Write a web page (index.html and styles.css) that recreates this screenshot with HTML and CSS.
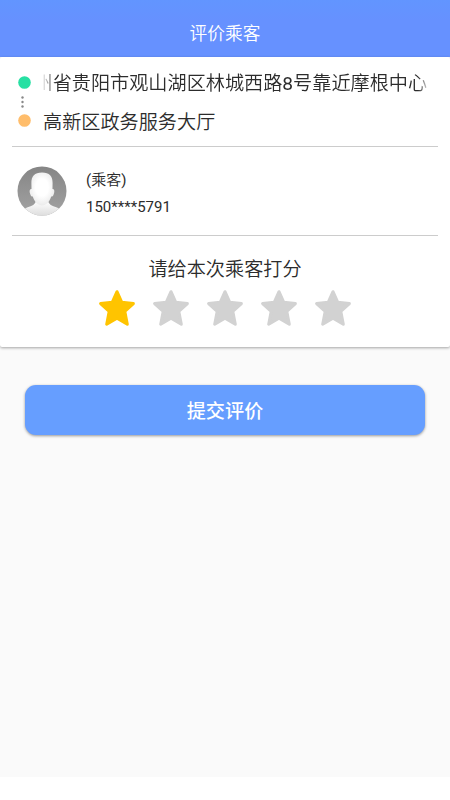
FILE: index.html
```html
<!DOCTYPE html>
<html lang="zh-CN">
<head>
<meta charset="utf-8">
<meta name="viewport" content="width=device-width">
<title>评价乘客</title>
<link rel="stylesheet" href="styles.css">
</head>
<body>
<svg class="defs" width="0" height="0">
  <symbol id="star" viewBox="0 0 38 38">
    <path d="M19 2.7 L23.7 13.2 L35.4 14.6 L26.8 22.4 L29.3 35.2 L19 29.3 L8.7 35.2 L11.2 22.4 L2.6 14.6 L14.3 13.2 Z" fill="currentColor" stroke="currentColor" stroke-width="3" stroke-linejoin="round"/>
  </symbol>
</svg>
<main class="screen">
  <header class="header"><h1 class="header-title">评价乘客</h1></header>
  <section class="card">
    <div class="trip">
      <div class="route-marks">
        <svg class="mark start" viewBox="0 0 13 13"><circle cx="6.5" cy="6.5" r="6.3"/></svg>
        <svg class="dots" viewBox="0 0 3 12"><circle cx="1.5" cy="1.5" r="1.2"/><circle cx="1.5" cy="6" r="1.2"/><circle cx="1.5" cy="10.5" r="1.2"/></svg>
        <svg class="mark end" viewBox="0 0 13 13"><circle cx="6.5" cy="6.5" r="6.3"/></svg>
      </div>
      <div class="places">
        <p class="place scrolling"><span class="marquee">州省贵阳市观山湖区林城西路<span class="num">8</span>号靠近摩根中心</span></p>
        <p class="place">高新区政务服务大厅</p>
      </div>
    </div>
    <div class="passenger">
      <svg class="avatar" viewBox="0 0 50 50">
        <defs>
          <linearGradient id="bg" x1="0" y1="0" x2="0" y2="1"><stop offset="0" stop-color="#858585"/><stop offset="1" stop-color="#a3a3a3"/></linearGradient>
          <radialGradient id="skin" cx=".5" cy=".45" r=".65"><stop offset=".4" stop-color="#fff"/><stop offset="1" stop-color="#e4e4e4"/></radialGradient>
          <linearGradient id="body" x1="0" y1="0" x2="0" y2="1"><stop offset="0" stop-color="#fff"/><stop offset="1" stop-color="#dcdcdc"/></linearGradient>
          <clipPath id="round"><circle cx="25" cy="25" r="24.5"/></clipPath>
        </defs>
        <g clip-path="url(#round)">
          <path d="M0 0H50V50H0Z" fill="url(#bg)"/>
          <path d="M5 50 Q6 43 10 41.5 Q18 39.5 19 35 H31 Q32 39.5 40 41.5 Q44 43 45 50Z" fill="url(#body)"/>
          <path d="M25 6.5 C17.5 6.5 14.3 10.5 14.4 17 L14.5 23 C12.4 23 12.3 25.5 13.2 28 C13.8 30 14.7 30.7 15.8 30.5 C17.5 36 21 39.5 25 39.5 C29 39.5 32.5 36 34.2 30.5 C35.3 30.7 36.2 30 36.8 28 C37.7 25.5 37.6 23 35.5 23 L35.6 17 C35.7 10.5 32.5 6.5 25 6.5Z" fill="url(#skin)"/>
        </g>
      </svg>
      <div class="passenger-info">
        <p class="role"><span class="num">(</span>乘客<span class="num">)</span></p>
        <p>150****5791</p>
      </div>
    </div>
    <div class="rating">
      <h2 class="rating-title">请给本次乘客打分</h2>
      <div class="stars">
        <svg class="star on"><use href="#star"/></svg>
        <svg class="star"><use href="#star"/></svg>
        <svg class="star"><use href="#star"/></svg>
        <svg class="star"><use href="#star"/></svg>
        <svg class="star"><use href="#star"/></svg>
      </div>
    </div>
  </section>
  <button class="submit" type="button">提交评价</button>
</main>
</body>
</html>
```
FILE: styles.css
```css
* { box-sizing: border-box; }
body {
  margin: 0;
  background: #fff;
  color: #2c2c2c;
  font-family: Roboto, "Noto Sans CJK SC", sans-serif;
}
h1, h2, p { margin: 0; font-weight: 400; }
.defs { display: block; }
.num { font-weight: 400; }
.screen { height: 777px; background: #fafafa; overflow: hidden; }
.header {
  height: 56.5px;
  padding-top: 20px;
  background: linear-gradient(#6295ff, #6691ff 20px);
  text-align: center;
}
.header-title { color: #fff; font-size: 17.7px; font-weight: 350; line-height: 28px; }
.card {
  height: 290.5px;
  padding: 0 12.5px;
  background: #fff;
  border-radius: 2px;
  box-shadow: 0 1px 3px rgba(0, 0, 0, .35);
}
.trip {
  display: flex;
  height: 90.5px;
  padding: 7.5px 10px 0 5px;
}
.route-marks {
  display: flex;
  flex-direction: column;
  align-items: center;
  width: 13px;
  margin-right: 12.5px;
  padding-top: 12px;
}
.mark { flex: none; width: 13px; height: 13px; }
.start { fill: #27e0a3; }
.end { fill: #ffbd6b; }
.dots {
  flex: none;
  width: 3px;
  height: 12px;
  margin: 6.5px 2.5px 6.5px 0;
  fill: #888;
}
.places { width: 384px; padding-top: 1px; }
.place { height: 38.5px; font-size: 19.15px; font-weight: 350; line-height: 38px; white-space: nowrap; }
.scrolling {
  overflow: hidden;
  -webkit-mask-image: linear-gradient(90deg, rgba(0,0,0,.1), #000 13px, #000 375px, rgba(0,0,0,.25));
  mask-image: linear-gradient(90deg, rgba(0,0,0,.1), #000 13px, #000 375px, rgba(0,0,0,.25));
}
.marquee { display: inline-block; margin-left: -9.5px; }
.passenger {
  display: flex;
  align-items: center;
  height: 90px;
  padding-left: 5px;
  border-top: 1px solid #ccc;
  border-bottom: 1px solid #ccc;
  margin: -1px -.5px 0;
}
.avatar { width: 50px; height: 50px; margin-right: 19px; }
.passenger-info { font-size: 15px; line-height: 27px; padding-top: 6px; }
.role { font-weight: 350; }
.rating { padding-top: 20px; text-align: center; }
.rating-title { font-size: 19.15px; font-weight: 350; line-height: 28px; }
.stars { display: flex; justify-content: center; gap: 16.2px; margin-top: 5px; }
.star { width: 38px; height: 38px; color: #d2d2d2; }
.star.on { color: #ffc400; }
.submit {
  display: block;
  width: 400px;
  height: 50px;
  margin: 37.5px auto 0;
  padding: 2px 0 0;
  border: 0;
  border-radius: 11px;
  background: #669eff;
  box-shadow: 0 1px 3px rgba(0, 0, 0, .4);
  color: #fff;
  font: 500 19.15px/50px Roboto, "Noto Sans CJK SC", sans-serif;
}
```
